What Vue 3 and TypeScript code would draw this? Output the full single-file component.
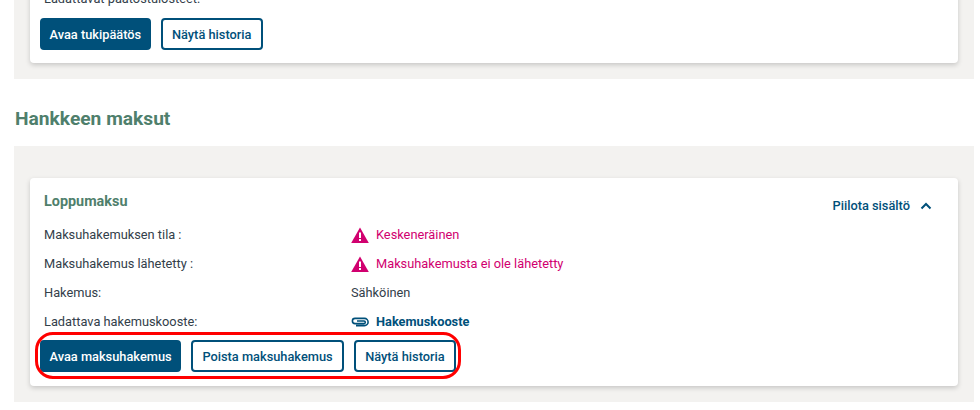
<script setup lang="ts">
interface Row { label: string; value: string; kind: 'warn' | 'plain' | 'link' }
const rows: Row[] = [
  { label: 'Maksuhakemuksen tila :', value: 'Keskeneräinen', kind: 'warn' },
  { label: 'Maksuhakemus lähetetty :', value: 'Maksuhakemusta ei ole lähetetty', kind: 'warn' },
  { label: 'Hakemus:', value: 'Sähköinen', kind: 'plain' },
  { label: 'Ladattava hakemuskooste:', value: 'Hakemuskooste', kind: 'link' },
]
</script>

<template>
  <div class="page">
    <section class="panel top-panel">
      <div class="card top-card">
        <p class="clipped">Ladattavat päätöstulosteet:</p>
        <div class="actions">
          <button class="btn primary">Avaa tukipäätös</button>
          <button class="btn">Näytä historia</button>
        </div>
      </div>
    </section>
    <h2 class="heading">Hankkeen maksut</h2>
    <section class="panel">
      <div class="card">
        <div class="card-head">
          <h3>Loppumaksu</h3>
          <a class="toggle">Piilota sisältö
            <svg width="12" height="8" viewBox="0 0 12 8"><path d="M1.5 6.5 6 2l4.5 4.5" fill="none" stroke="#00507a" stroke-width="2"/></svg>
          </a>
        </div>
        <div v-for="r in rows" :key="r.label" class="row">
          <span class="label">{{ r.label }}</span>
          <span class="value" :class="r.kind">
            <svg v-if="r.kind === 'warn'" class="icon" width="18" height="16" viewBox="0 0 18 16">
              <path d="M9 .5 17.8 16H.2z" fill="#d1006f" />
              <rect x="8" y="5.5" width="2" height="5.5" fill="#fff" />
              <rect x="8" y="12" width="2" height="2" fill="#fff" />
            </svg>
            <svg v-if="r.kind === 'link'" class="icon" width="18" height="10" viewBox="0 0 18 10">
              <path d="M5 8.6H13.5a3.6 3.6 0 0 0 0-7.2H4a2.6 2.6 0 0 0 0 5.2H13a1.3 1.3 0 0 0 0-2.6H6" fill="none" stroke="#00507a" stroke-width="1.6"/>
            </svg>
            {{ r.value }}
          </span>
        </div>
        <div class="actions bottom">
          <button class="btn primary">Avaa maksuhakemus</button>
          <button class="btn">Poista maksuhakemus</button>
          <button class="btn">Näytä historia</button>
          <div class="highlight"></div>
        </div>
      </div>
    </section>
  </div>
</template>

<style>
html, body { margin: 0; background: #fff; }
</style>

<style scoped>
.page {
  width: 980px;
  height: 410px;
  overflow: hidden;
  box-sizing: border-box;
  padding: 0 6px 0 14px;
  font-family: Roboto, sans-serif;
  font-size: 12.8px;
  color: #33404a;
}
.panel {
  background: #f3f2f0;
  padding: 32px 16px 16px;
}
.top-panel { margin-top: -32px; padding-top: 0; }
.card {
  background: #fff;
  border-radius: 4px;
  box-shadow: 0 2px 5px rgba(0, 0, 0, 0.18);
  padding: 13px 14px 13px 14px;
}
.top-card { padding: 0 10px 13px; height: 95px; box-sizing: border-box; display: flex; flex-direction: column; justify-content: flex-end; }
.clipped { margin: 0 0 11px 4px; line-height: 16px; }
.actions { display: flex; gap: 10px; }
.btn {
  box-sizing: border-box;
  height: 32px;
  padding: 0 9.3px;
  border: 2px solid #00507a;
  border-radius: 4px;
  background: #fff;
  color: #00507a;
  font: 500 12.8px Roboto, sans-serif;
}
.btn.primary { background: #00507a; color: #fff; padding: 0 7.5px; }
.heading {
  box-sizing: border-box;
  margin: 0;
  height: 67px;
  padding: 11px 0 0 1px;
  display: flex;
  align-items: center;
  font-size: 19.2px;
  font-weight: 700;
  color: #4f7f6c;
}
.card-head { display: flex; justify-content: space-between; align-items: flex-start; height: 29px; }
.card-head h3 { margin: 0; font-size: 14.4px; font-weight: 700; color: #4f7f6c; line-height: 22px; }
.toggle {
  color: #00507a;
  font-weight: 500;
  font-size: 12.8px;
  margin: 7px 12px 0 0;
  display: flex;
  align-items: center;
  gap: 10px;
}
.row { display: flex; height: 29px; align-items: center; }
.label { width: 307px; }
.value { display: flex; align-items: center; gap: 7px; }
.icon { flex: none; }
.warn { color: #d1006f; }
.link { color: #00507a; font-weight: 700; }
.bottom { position: relative; margin: 4px 0 1px -4px; width: max-content; gap: 10px; }
.highlight {
  position: absolute;
  left: -5px;
  top: -8px;
  width: 426px;
  height: 47px;
  box-sizing: border-box;
  border: 3px solid #f00;
  border-radius: 18px;
}
</style>
